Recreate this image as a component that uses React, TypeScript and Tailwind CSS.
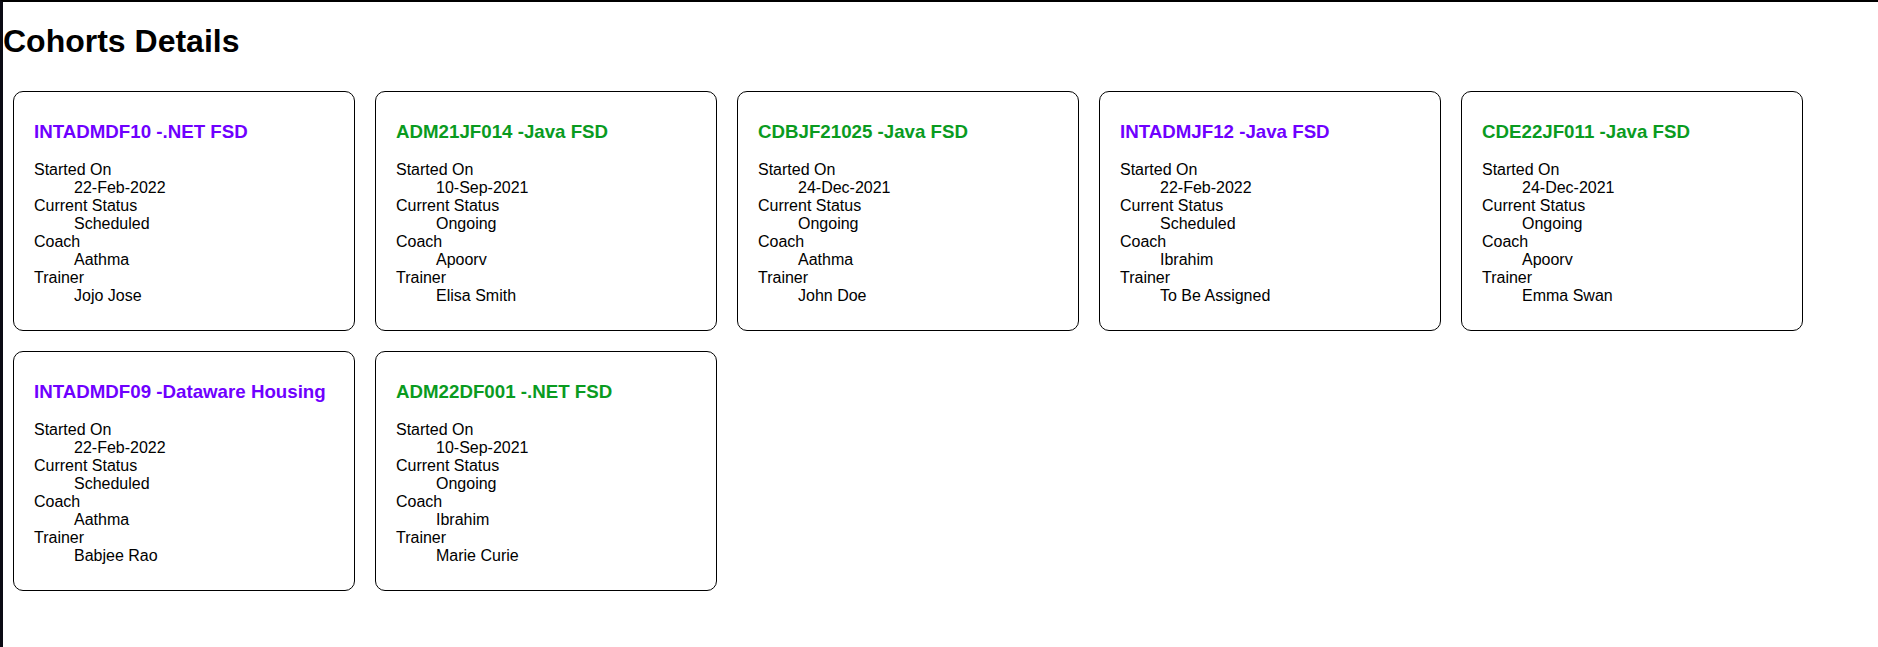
import React, {FC} from 'react';

interface Cohort {
    code: string,
    technology: string,
    startDate: string,
    status: string,
    coach: string,
    trainer: string,
}

const cohorts: Cohort[] = [
    {code: 'INTADMDF10', technology: '.NET FSD', startDate: '22-Feb-2022', status: 'Scheduled', coach: 'Aathma', trainer: 'Jojo Jose'},
    {code: 'ADM21JF014', technology: 'Java FSD', startDate: '10-Sep-2021', status: 'Ongoing', coach: 'Apoorv', trainer: 'Elisa Smith'},
    {code: 'CDBJF21025', technology: 'Java FSD', startDate: '24-Dec-2021', status: 'Ongoing', coach: 'Aathma', trainer: 'John Doe'},
    {code: 'INTADMJF12', technology: 'Java FSD', startDate: '22-Feb-2022', status: 'Scheduled', coach: 'Ibrahim', trainer: 'To Be Assigned'},
    {code: 'CDE22JF011', technology: 'Java FSD', startDate: '24-Dec-2021', status: 'Ongoing', coach: 'Apoorv', trainer: 'Emma Swan'},
    {code: 'INTADMDF09', technology: 'Dataware Housing', startDate: '22-Feb-2022', status: 'Scheduled', coach: 'Aathma', trainer: 'Babjee Rao'},
    {code: 'ADM22DF001', technology: '.NET FSD', startDate: '10-Sep-2021', status: 'Ongoing', coach: 'Ibrahim', trainer: 'Marie Curie'},
];

const CohortDetails: FC<{ cohort: Cohort }> = ({cohort}) => {
    const ongoing = cohort.status === 'Ongoing';
    return (
        <div className="w-[342px] m-[10px] pt-[29px] pb-[25px] px-[20px] border border-black rounded-[10px]">
            <h3
                className={`text-[18.72px] leading-[22px] font-bold mb-[18px] ${ongoing ? 'text-[#0a9b1f]' : 'text-[#6f00ff]'}`}
            >
                {cohort.code} -{cohort.technology}
            </h3>
            <dl className="text-[16px] leading-[18px]">
                <dt>Started On</dt>
                <dd className="ml-[40px]">{cohort.startDate}</dd>
                <dt>Current Status</dt>
                <dd className="ml-[40px]">{cohort.status}</dd>
                <dt>Coach</dt>
                <dd className="ml-[40px]">{cohort.coach}</dd>
                <dt>Trainer</dt>
                <dd className="ml-[40px]">{cohort.trainer}</dd>
            </dl>
        </div>
    );
};

const App: FC = () => {
    return (
        <div
            className="
                min-h-screen
                bg-white
                text-black
                border-t-2
                border-t-black
                border-l-[3px]
                border-l-[#0b0b14]
                font-['Liberation_Sans',Arial,sans-serif]
            "
        >
            <h1 className="text-[32px] leading-[37px] font-bold mt-[21px] mb-[21px]">Cohorts Details</h1>
            <div className="flex flex-wrap">
                {cohorts.map((c) => <CohortDetails key={c.code} cohort={c}/>)}
            </div>
        </div>
    );
};

export default App;
